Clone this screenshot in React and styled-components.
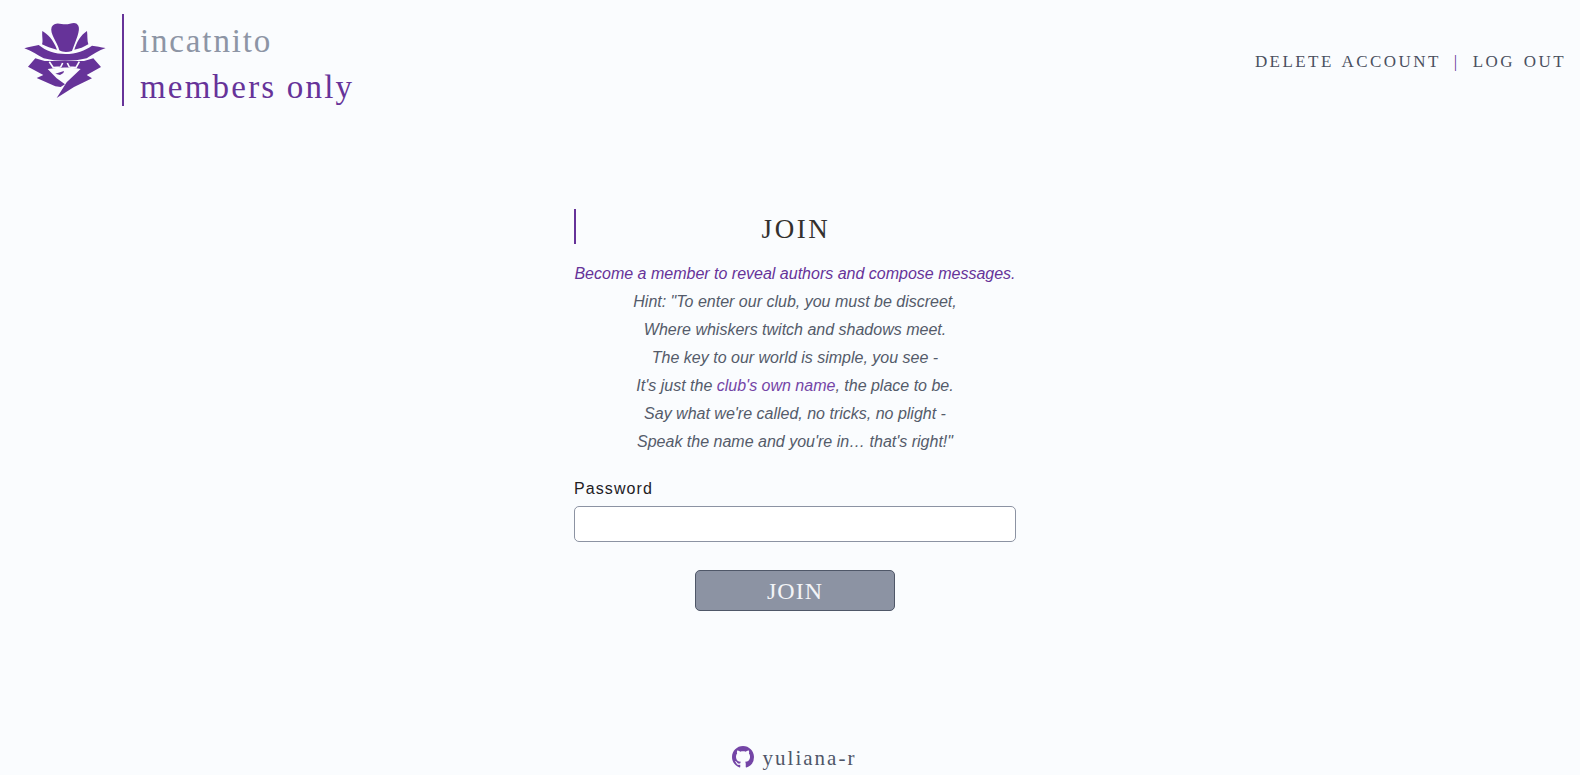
import React from "react";
import styled, { createGlobalStyle } from "styled-components";

const Global = createGlobalStyle`
  html, body { margin: 0; padding: 0; background: #fafcfe; }
  body { font-family: "Liberation Sans", Arial, sans-serif; }
  * { box-sizing: border-box; }
`;
const SLAB = `"Liberation Serif", "DejaVu Serif", serif`;
const Page = styled.div`
  height: 775px; display: flex; flex-direction: column; overflow: hidden;
`;
const Header = styled.header`
  display: flex; justify-content: space-between; align-items: center;
  padding: 14px 14px 0 24px;
`;
const Brand = styled.div`display: flex; align-items: center;`;
const Logo = styled.svg`width: 82px; height: 80px; display: block; margin-right: 16px;`;
const BrandText = styled.div`
  border-left: 2px solid #663399; height: 92px; padding: 4px 0 0 16px;
  font-family: ${SLAB}; font-size: 33px;
  display: flex; flex-direction: column;
`;
const BrandLine = styled.div`
  color: ${p => p.$accent ? "#663399" : "#8d95a5"}; line-height: 46px; height: 46px;
  letter-spacing: ${p => p.$accent ? "2.2px" : "1.85px"};
`;
const Nav = styled.nav`
  display: flex; align-items: center; margin-top: 3px;
  font-family: ${SLAB}; font-size: 17px; letter-spacing: 2.45px; word-spacing: 2px; color: #4a5060;
`;
const Sep = styled.span`color: #663399; margin: 0 13px 0 13px; font-size: 17px;`;
const Main = styled.main`
  width: 442px; margin: 103px 0 0 574px; flex: 1;
`;
const Title = styled.h1`
  margin: 0 0 16px; border-left: 2px solid #663399; height: 35px; line-height: 40px;
  text-align: center; font-family: ${SLAB}; font-weight: 400; font-size: 27px;
  letter-spacing: 2.6px; color: #33302e;
`;
const Verse = styled.p`
  margin: 0; text-align: center; font-style: italic; font-size: 16px; line-height: 28px; color: #545b6a;
`;
const Lead = styled.span`color: ${p => p.$soft ? "#7445a6" : "#663399"};`;
const Field = styled.div`margin-top: 21px;`;
const Label = styled.label`
  display: block; font-size: 16px; letter-spacing: 1.1px; color: #22201f; line-height: 24px; margin-bottom: 5px;
`;
const Input = styled.input`
  display: block; width: 100%; height: 36px; background: #fff;
  border: 1px solid #8c93a3; border-radius: 5px; outline: none;
`;
const Submit = styled.button`
  display: block; width: 200px; height: 41px; margin: 28px auto 0; background: #8c93a3;
  border: 1px solid #4f5768; border-radius: 5px; color: #f3f4f7;
  font-family: ${SLAB}; font-size: 24px; letter-spacing: 1px; padding: 2px 0 0;
`;
const Footer = styled.footer`
  height: 36px; display: flex; align-items: flex-start; justify-content: center; gap: 9px;
  padding-left: 8px; color: #4f5668;
  font-family: ${SLAB}; font-size: 21px; letter-spacing: 2px;
`;
const GitHub = styled.svg`width: 22px; height: 22px; fill: #7445a6; margin-top: 7px;`;
const Handle = styled.span`line-height: 26px; margin-top: 6px;`;

function Spy() {
  return (
    <Logo viewBox="42 25 246 240" aria-label="logo">
      <g fill="#663399">
        <path d="M125 46C136 28 152 38 166 38C182 38 196 26 205 42C212 56 198 84 186 118C172 122 158 122 148 116C142 90 118 66 125 46Z" />
        <path d="M97 58C112 66 130 84 141 114C124 110 108 104 96 98C100 88 95 72 97 58Z" />
        <path d="M231 58C233 72 231 86 235 98C222 106 208 112 193 114C200 92 212 70 231 58Z" />
        <path d="M43 110C58 105 72 103 86 100C108 118 135 127 166 127C198 127 226 116 246 102C260 104 272 106 287 109C266 116 250 128 230 140C190 150 140 150 101 140C82 130 66 118 43 110Z" />
        <path d="M76 140L104 148L222 148L250 140L273 166L230 190L246 200L192 226L140 259L170 212L212 172C180 166 146 166 113 172L140 200L165 218L152 226L136 224L80 199L100 190L54 165Z" />
        <path d="M136 186L162 178L160 184L150 190Z" />
      </g>
      <g fill="none" stroke="#fafcfe" strokeWidth="5" strokeLinejoin="round">
        <path d="M118 150L130 168L152 166L158 154" />
        <path d="M172 154L178 166L198 168L208 150" />
      </g>
    </Logo>
  );
}

export default function App() {
  return (
    <Page>
      <Global />
      <Header>
        <Brand>
          <Spy />
          <BrandText>
            <BrandLine>incatnito</BrandLine>
            <BrandLine $accent>members only</BrandLine>
          </BrandText>
        </Brand>
        <Nav>DELETE ACCOUNT<Sep>|</Sep>LOG OUT</Nav>
      </Header>
      <Main>
        <Title>JOIN</Title>
        <Verse>
          <Lead>Become a member to reveal authors and compose messages.</Lead><br />
          Hint: "To enter our club, you must be discreet,<br />
          Where whiskers twitch and shadows meet.<br />
          The key to our world is simple, you see -<br />
          It's just the <Lead $soft>club's own name</Lead>, the place to be.<br />
          Say what we're called, no tricks, no plight -<br />
          Speak the name and you're in… that's right!"
        </Verse>
        <Field>
          <Label htmlFor="pw">Password</Label>
          <Input id="pw" type="password" />
        </Field>
        <Submit type="button">JOIN</Submit>
      </Main>
      <Footer>
        <GitHub viewBox="0 0 16 16"><path d="M8 0C3.58 0 0 3.58 0 8c0 3.54 2.29 6.53 5.47 7.59.4.07.55-.17.55-.38 0-.19-.01-.82-.01-1.49-2.01.37-2.53-.49-2.69-.94-.09-.23-.48-.94-.82-1.13-.28-.15-.68-.52-.01-.53.63-.01 1.08.58 1.23.82.72 1.21 1.87.87 2.33.66.07-.52.28-.87.51-1.07-1.78-.2-3.64-.89-3.64-3.95 0-.87.31-1.59.82-2.15-.08-.2-.36-1.02.08-2.12 0 0 .67-.21 2.2.82.64-.18 1.32-.27 2-.27s1.36.09 2 .27c1.53-1.04 2.2-.82 2.2-.82.44 1.1.16 1.92.08 2.12.51.56.82 1.27.82 2.15 0 3.07-1.87 3.75-3.65 3.95.29.25.54.73.54 1.48 0 1.07-.01 1.93-.01 2.2 0 .21.15.46.55.38A8.01 8.01 0 0 0 16 8c0-4.42-3.58-8-8-8z" /></GitHub>
        <Handle>yuliana-r</Handle>
      </Footer>
    </Page>
  );
}
